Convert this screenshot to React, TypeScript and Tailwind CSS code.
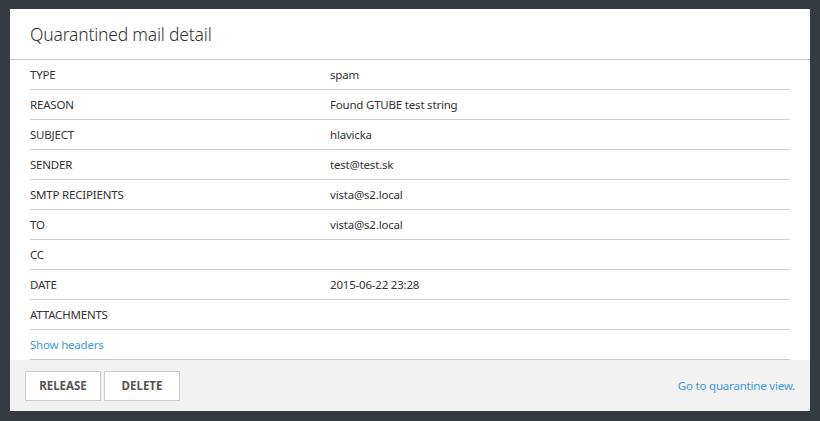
const rows: [string, string][] = [
  ['TYPE', 'spam'],
  ['REASON', 'Found GTUBE test string'],
  ['SUBJECT', 'hlavicka'],
  ['SENDER', 'test@test.sk'],
  ['SMTP RECIPIENTS', 'vista@s2.local'],
  ['TO', 'vista@s2.local'],
  ['CC', ''],
  ['DATE', '2015-06-22 23:28'],
  ['ATTACHMENTS', ''],
];

export default function App() {
  return (
    <div
      className="h-[421px] w-[820px] bg-[#363a41] pt-[9px] pl-[10px]"
      style={{ fontFamily: '"Noto Sans", "Open Sans", sans-serif' }}
    >
      <div className="flex h-[402px] w-[800px] flex-col bg-white">
        <div className="flex h-[51px] items-center border-b border-[#c8c8c8] px-5">
          <h1 className="text-[17.5px] font-light tracking-[-0.2px] text-[#333]">Quarantined mail detail</h1>
        </div>
        <div className="px-5">
          {rows.map(([label, value]) => (
            <div
              key={label}
              className="flex h-[30px] items-center border-b border-[#d0d0d0] text-[11.5px] tracking-[-0.2px] text-[#333]"
            >
              <div className="w-[300px]">{label}</div>
              <div>{value}</div>
            </div>
          ))}
          <div className="flex h-[30px] items-center border-b border-[#c8c8c8] text-[11.5px] tracking-[-0.2px]">
            <a className="text-[#3a9ad9]" href="#">Show headers</a>
          </div>
        </div>
        <div className="flex flex-1 items-center justify-between bg-[#f2f2f2] pr-[15px] pl-[15px]">
          <div className="flex gap-[3px]">
            <button className="h-[30px] w-[76px] border border-[#ccc] bg-white text-[11.5px] font-bold text-[#555]">RELEASE</button>
            <button className="h-[30px] w-[76px] border border-[#ccc] bg-white text-[11.5px] font-bold text-[#555]">DELETE</button>
          </div>
          <a className="text-[11.5px] tracking-[-0.2px] text-[#3a9ad9]" href="#">Go to quarantine view.</a>
        </div>
      </div>
    </div>
  );
}
